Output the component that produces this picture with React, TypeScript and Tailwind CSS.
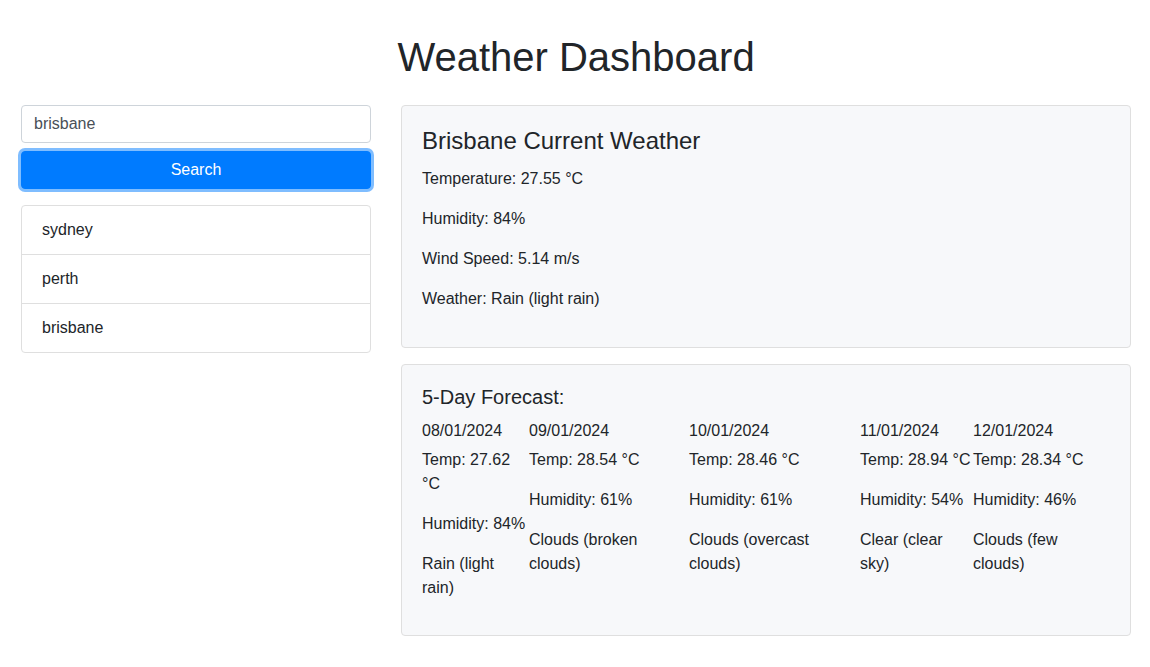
import React from 'react';

const history = ['sydney', 'perth', 'brisbane'];

const forecast = [
  { date: '08/01/2024', temp: '27.62', humidity: '84%', weather: 'Rain (light rain)', w: 'w-[107px]' },
  { date: '09/01/2024', temp: '28.54', humidity: '61%', weather: 'Clouds (broken clouds)', w: 'w-[160px]' },
  { date: '10/01/2024', temp: '28.46', humidity: '61%', weather: 'Clouds (overcast clouds)', w: 'w-[171px]' },
  { date: '11/01/2024', temp: '28.94', humidity: '54%', weather: 'Clear (clear sky)', w: 'w-[113px]' },
  { date: '12/01/2024', temp: '28.34', humidity: '46%', weather: 'Clouds (few clouds)', w: 'w-[137px]' },
];

export default function App() {
  return (
    <div className="min-h-[667px] bg-white text-[#212529] font-['Liberation_Sans',Arial,sans-serif] text-base leading-6">
      <div className="w-[1110px] ml-[21px] pt-[33px]">
        <h1 className="text-[40px] leading-[48px] text-center mb-6">Weather Dashboard</h1>

        <div className="flex gap-[30px] items-start">
          {/* Search side */}
          <div className="w-[350px]">
            <input
              className="block w-full h-[38px] px-3 border border-[#ced4da] rounded text-[#495057] bg-white outline-none"
              defaultValue="brisbane"
            />
            <button className="mt-2 w-full h-[38px] rounded bg-[#007bff] border border-[#007bff] text-white shadow-[0_0_0_3px_rgba(0,123,255,0.5)]">
              Search
            </button>
            <ul className="mt-4 border border-[#dfdfdf] rounded">
              {history.map((city, i) => (
                <li
                  key={city}
                  className={`px-5 py-3 ${i > 0 ? 'border-t border-[#dfdfdf]' : ''}`}
                >
                  {city}
                </li>
              ))}
            </ul>
          </div>

          {/* Weather side */}
          <div className="w-[730px]">
            <div className="bg-[#f7f8fa] border border-[#dfdfdf] rounded p-5">
              <h4 className="text-2xl leading-[29px] mb-3">Brisbane Current Weather</h4>
              <p className="mb-4">Temperature: 27.55 °C</p>
              <p className="mb-4">Humidity: 84%</p>
              <p className="mb-4">Wind Speed: 5.14 m/s</p>
              <p className="mb-4">Weather: Rain (light rain)</p>
            </div>

            <div className="mt-4 bg-[#f7f8fa] border border-[#dfdfdf] rounded px-5 pt-5 pb-[19px]">
              <h5 className="text-xl leading-6 mb-3">5-Day Forecast:</h5>
              <div className="flex">
                {forecast.map((d) => (
                  <div key={d.date} className={d.w}>
                    <div className="leading-[19px] mb-2">{d.date}</div>
                    <p className="mb-4">Temp: {d.temp} °C</p>
                    <p className="mb-4">Humidity: {d.humidity}</p>
                    <p className="mb-4">{d.weather}</p>
                  </div>
                ))}
              </div>
            </div>
          </div>
        </div>
      </div>
    </div>
  );
}
